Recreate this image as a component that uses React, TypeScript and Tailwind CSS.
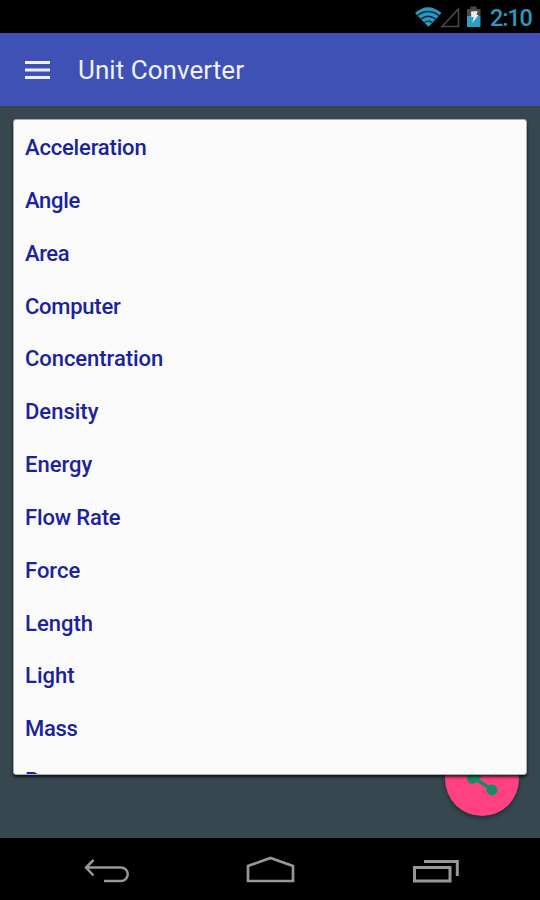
const units = [
  { name: 'Acceleration', spacing: 'tracking-[-0.18px]' },
  { name: 'Angle', spacing: 'tracking-[-0.3px]' },
  { name: 'Area', spacing: 'tracking-[-0.4px]' },
  { name: 'Computer', spacing: 'tracking-[-0.25px]' },
  { name: 'Concentration', spacing: 'tracking-[-0.05px]' },
  { name: 'Density', spacing: 'tracking-normal' },
  { name: 'Energy', spacing: 'tracking-normal' },
  { name: 'Flow Rate', spacing: 'tracking-[-0.15px]' },
  { name: 'Force', spacing: 'tracking-normal' },
  { name: 'Length', spacing: 'tracking-normal' },
  { name: 'Light', spacing: 'tracking-normal' },
  { name: 'Mass', spacing: 'tracking-[-0.3px]' },
  { name: 'Power', spacing: '-mt-[1px]' },
];

function StatusBar() {
  return (
    <div className="flex h-[33px] shrink-0 items-start justify-end bg-black pr-[8px]">
      <svg className="mt-[5px]" width="72" height="24" viewBox="412 5 72 24">
        <path d="M415 13 Q428 1.5 441.500 13 L428.500 27Z" fill="#2b98bf" />
        <path d="M417.500 15.500 Q428 7.500 439 15.500M421 19 Q428 13.500 435.500 19M424.500 22.500 Q428 19.800 432 22.500" fill="none" stroke="#062733" strokeWidth="1.300" />
        <path d="M458.500 9 V26.500 H442Z" fill="none" stroke="#494949" strokeWidth="1.500" />
        <path d="M467 9h3.500V6.500h6V9h4v7.500h-13.500Z" fill="#4b4b4b" />
        <path d="M467 16h13.500v11H467Z" fill="#2b9fc6" />
        <path d="M471 11.500l6.500-.5-.8 4h2l-6.500 8 1.500-6h-2.500Z" fill="#e5edf0" />
      </svg>
      <span className="ml-[6px] mt-[4px] w-[42px] whitespace-nowrap text-[23.500px] font-medium leading-[28px] tracking-[-1.100px] text-[#2c98bf]">2:10</span>
    </div>
  );
}

function NavBar() {
  return (
    <div className="h-[62px] shrink-0 bg-black">
      <svg width="540" height="62" viewBox="0 838 540 62" fill="none" stroke="#979797">
        <path d="M86.500 867.500H121a6.700 6.700 0 0 1 0 13.500H104M93.500 860l-7.500 7.500L93.500 875.500" strokeWidth="2.500" />
        <path d="M248 881V866l22.500-8 22.500 8v15Z" strokeWidth="2.700" />
        <path d="M414.500 867.500h35.500v13.500h-35.500Z" strokeWidth="3" />
        <path d="M424 861.500h33.300V876" strokeWidth="3" />
      </svg>
    </div>
  );
}

export default function App() {
  return (
    <div className="flex h-[900px] w-[540px] flex-col overflow-hidden bg-[#37474f] font-['Roboto',sans-serif]">
      <StatusBar />
      <header className="flex h-[73px] shrink-0 items-center bg-[#3f51b5] pl-[25px] text-[#eef0fa]">
        <svg width="25" height="20" viewBox="0 0 25 20" fill="currentColor">
          <path d="M0 1h25v3H0zM0 8.500h25v3H0zM0 16h25v3H0z" />
        </svg>
        <h1 className="ml-[28px] whitespace-nowrap text-[26px] font-normal leading-[34px] tracking-[0.05px]">Unit Converter</h1>
      </header>
      <main className="relative flex-1 px-[13px] pt-[13px]">
        <button aria-label="Share" className="absolute left-[445px] top-[636px] size-[74px] rounded-full bg-[#ff4081] shadow-[0_2px_4px_rgba(0,0,0,0.4)]">
          <svg width="74" height="74" viewBox="0 0 74 74" fill="#0f8f62" stroke="#0f8f62">
            <path d="M47 26L29 36 47 47.500" fill="none" strokeWidth="3.500" />
            <path d="M27 36L38 30 34 38Z" stroke="none" />
            <circle cx="47" cy="26" r="5" />
            <circle cx="27.500" cy="36" r="5.200" />
            <circle cx="47" cy="48" r="5" />
          </svg>
        </button>
        <ul className="relative h-[656px] w-[514px] overflow-hidden rounded-[3px] border border-[#a7afb2] bg-[#fafafa] pt-[1.600px] shadow-[0_2px_3px_rgba(0,0,0,0.75)]">
          {units.map(({ name, spacing }) => (
            <li key={name} className={`flex h-[52.85px] items-center pl-[11px] text-[22px] font-medium leading-[30px] text-[#1a239b] ${spacing}`}>{name}</li>
          ))}
        </ul>
      </main>
      <NavBar />
    </div>
  );
}
